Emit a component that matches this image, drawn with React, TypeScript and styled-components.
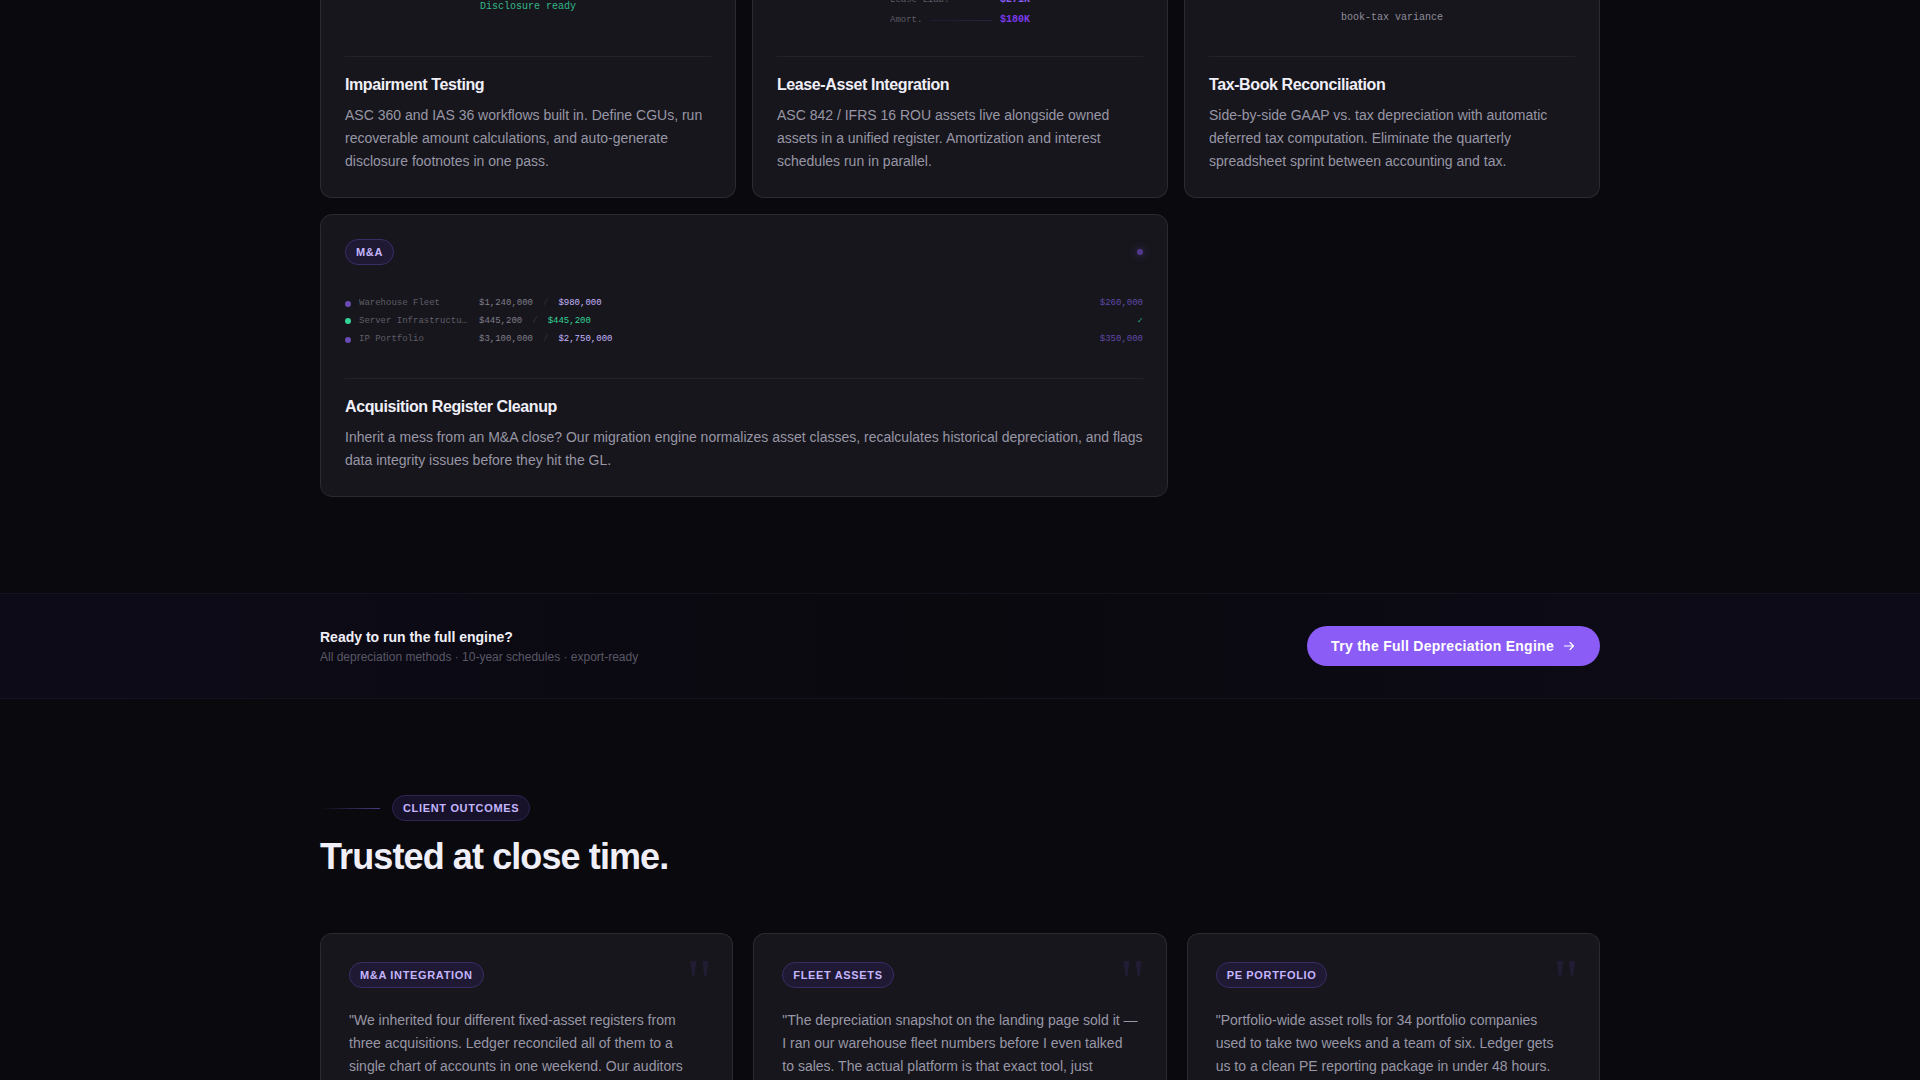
import React from 'react';
import styled, { createGlobalStyle, css } from 'styled-components';

const sans = `"Liberation Sans", Arial, sans-serif`;
const mono = `"Liberation Mono", "Courier New", monospace`;
const serif = `"Liberation Serif", Georgia, serif`;

const GlobalStyle = createGlobalStyle`
  *, *::before, *::after { box-sizing: border-box; }
  body {
    margin: 0;
    background: #09090e;
    color: #f0eff8;
    font-family: ${sans};
    -webkit-font-smoothing: antialiased;
  }
  h2, h3, p, blockquote, figure { margin: 0; }
`;

const Page = styled.main`
  display: flex;
  flex-direction: column;
  height: 100vh;
  overflow: hidden;
`;

const Container = styled.div`
  width: 100%;
  max-width: 1328px;
  margin: 0 auto;
  padding: 0 24px;
`;

const FeatureSection = styled.section`
  flex: none;
  padding-bottom: 96px;
`;

const FeatureGrid = styled.div`
  display: grid;
  grid-template-columns: repeat(3, 1fr);
  gap: 16px;
`;

const surface = css`
  background: #17161c;
  border: 1px solid #2b2a30;
  border-radius: 12px;
`;

const FeatureCard = styled.article<{ $wide?: boolean; $cut?: boolean }>`
  ${surface}
  padding: 24px;
  ${(p) => p.$wide && css`grid-column: span 2;`}
  ${(p) =>
    p.$cut &&
    css`
      padding-top: 0;
      border-top: 0;
      border-top-left-radius: 0;
      border-top-right-radius: 0;
    `}
`;

const CutVisual = styled.div<{ $space: number }>`
  display: flex;
  flex-direction: column;
  align-items: center;
  justify-content: flex-end;
  height: 56px;
  padding-bottom: ${(p) => p.$space}px;
  overflow: hidden;
`;

const Caption = styled.span<{ $ready?: boolean }>`
  flex: none;
  font: 10px/14px ${mono};
  color: ${(p) => (p.$ready ? '#34b88a' : '#8f8d9b')};
`;

const LeaseRows = styled.div`
  display: flex;
  flex: none;
  flex-direction: column;
  gap: 6px;
  width: 140px;
`;

const LeaseRow = styled.div`
  display: flex;
  align-items: center;
  gap: 8px;
  height: 14px;
  font: 9px/14px ${mono};
  color: #5d5b67;
`;

const LeaseLine = styled.span`
  flex: 1;
  height: 1px;
  background: linear-gradient(90deg, #1f1b30, #282143);
`;

const LeaseValue = styled.b<{ $deep?: boolean }>`
  margin-left: auto;
  font-size: 10px;
  color: ${(p) => (p.$deep ? '#7c3aed' : '#8b5cf6')};
`;

const FeatureBody = styled.div`
  padding-top: 16px;
  border-top: 1px solid #232228;
`;

const FeatureTitle = styled.h3`
  margin-bottom: 8px;
  font-size: 16px;
  line-height: 23px;
  letter-spacing: -0.025em;
  color: #f0eff8;
`;

const FeatureText = styled.p`
  font-size: 14px;
  line-height: 23px;
  color: #9896a6;
`;

const CardTop = styled.div`
  display: flex;
  align-items: center;
  justify-content: space-between;
`;

const Tag = styled.span`
  display: inline-block;
  padding: 0 10px;
  border: 1px solid #3a2d66;
  border-radius: 13px;
  background: #1f1933;
  font-size: 11px;
  font-weight: 700;
  line-height: 24px;
  letter-spacing: 0.06em;
  text-transform: uppercase;
  white-space: nowrap;
  color: #c4b5fd;
`;

const StatusDot = styled.span`
  width: 6px;
  height: 6px;
  border-radius: 50%;
  background: #513a8e;
  box-shadow: 0 0 8px #513a8e;
`;

const RegisterWrap = styled.div`
  display: flex;
  align-items: center;
  height: 81px;
  margin: 16px 0;
`;

const RegisterTable = styled.table`
  width: 100%;
  border-collapse: collapse;
  font: 9px/18px ${mono};
  td, th { padding: 0; height: 18px; line-height: 16px; text-align: left; font-weight: 400; vertical-align: top; }
`;

const AssetName = styled.th`
  width: 134px;
  color: #5f5d68;
`;

const AssetLabel = styled.span`
  display: grid;
  grid-template-columns: 6px 112px;
  align-items: center;
  column-gap: 8px;
  height: 16px;
`;

const AssetDot = styled.i<{ $ok?: boolean }>`
  width: 6px;
  height: 6px;
  margin-top: ${(p) => (p.$ok ? 0 : 2)}px;
  border-radius: 50%;
  background: ${(p) => (p.$ok ? '#34d399' : '#684bb5')};
`;

const Clip = styled.span`
  overflow: hidden;
  text-overflow: ellipsis;
  white-space: nowrap;
`;

const Amounts = styled.div`
  display: flex;
  gap: 10px;
  color: #807e8b;
`;

const Slash = styled.span`
  color: #33323a;
`;

const After = styled.span<{ $ok?: boolean }>`
  color: ${(p) => (p.$ok ? '#34d399' : '#c4b5fd')};
`;

const Difference = styled.td<{ $ok?: boolean }>`
  && {
    text-align: right;
    font-weight: ${(p) => (p.$ok ? 700 : 400)};
  }
  color: ${(p) => (p.$ok ? '#2bab7e' : '#6048a8')};
`;

const Banner = styled.section`
  flex: none;
  padding: 32px 0;
  border-top: 1px solid #15131f;
  border-bottom: 1px solid #15131f;
  background: linear-gradient(90deg, #0e0b19, #09090e 50%, #0e0b19);
`;

const BannerRow = styled.div`
  display: flex;
  align-items: center;
  justify-content: space-between;
`;

const BannerTitle = styled.p`
  font-size: 14px;
  font-weight: 700;
  line-height: 22px;
  color: #f0eff8;
`;

const BannerNote = styled.p`
  font-size: 12px;
  line-height: 18px;
  color: #5a5866;
`;

const EngineButton = styled.button`
  display: inline-flex;
  align-items: center;
  gap: 8px;
  height: 40px;
  padding: 0 24px;
  border: 0;
  border-radius: 20px;
  background: #8b5cf6;
  font: 700 14px/20px ${sans};
  letter-spacing: 0.02em;
  color: #fff;
  cursor: pointer;
`;

const Outcomes = styled.section`
  display: flex;
  flex: 1;
  flex-direction: column;
  padding-top: 96px;
  ${Container} { display: flex; flex: 1; flex-direction: column; }
`;

const Eyebrow = styled.div`
  display: flex;
  align-items: center;
  gap: 12px;
  margin-bottom: 16px;
  ${Tag} { background: #17122a; border-color: #2f2554; }
`;

const EyebrowLine = styled.span`
  width: 60px;
  height: 1px;
  background: linear-gradient(90deg, transparent, #4a3a80);
`;

const Heading = styled.h2`
  margin-bottom: 56px;
  font-size: 36px;
  line-height: 40px;
  letter-spacing: -0.025em;
  color: #f0eff8;
`;

const QuoteGrid = styled.div`
  display: grid;
  flex: 1;
  grid-template-columns: repeat(3, 1fr);
  gap: 20px;
`;

const QuoteCard = styled.figure`
  ${surface}
  position: relative;
  padding: 28px 28px 0;
  border-bottom: 0;
  border-bottom-left-radius: 0;
  border-bottom-right-radius: 0;
`;

const QuoteMark = styled.span`
  position: absolute;
  top: 16px;
  right: 20px;
  font: 64px/64px ${serif};
  color: #211c34;
`;

const QuoteText = styled.blockquote`
  margin-top: 21px;
  font-size: 14px;
  line-height: 23px;
  color: #9896a6;
`;

const register = [
  { name: 'Warehouse Fleet', before: '$1,240,000', after: '$980,000', diff: '$260,000', ok: false },
  { name: 'Server Infrastructure', before: '$445,200', after: '$445,200', diff: '✓', ok: true },
  { name: 'IP Portfolio', before: '$3,100,000', after: '$2,750,000', diff: '$350,000', ok: false },
];

const quotes = [
  {
    tag: 'M&A Integration',
    lines: ['"We inherited four different fixed-asset registers from', 'three acquisitions. Ledger reconciled all of them to a', 'single chart of accounts in one weekend. Our auditors'],
  },
  {
    tag: 'Fleet Assets',
    lines: ['"The depreciation snapshot on the landing page sold it —', 'I ran our warehouse fleet numbers before I even talked', 'to sales. The actual platform is that exact tool, just'],
  },
  {
    tag: 'PE Portfolio',
    lines: ['"Portfolio-wide asset rolls for 34 portfolio companies', 'used to take two weeks and a team of six. Ledger gets', 'us to a clean PE reporting package in under 48 hours.'],
  },
];

function Feature({ title, children }: { title: string; children: React.ReactNode }) {
  return (
    <FeatureBody>
      <FeatureTitle>{title}</FeatureTitle>
      <FeatureText>{children}</FeatureText>
    </FeatureBody>
  );
}

function ArrowIcon() {
  return (
    <svg width="14" height="14" viewBox="0 0 14 14" fill="none" stroke="currentColor" strokeWidth="1.2" strokeLinecap="round" strokeLinejoin="round" aria-hidden="true">
      <path d="M2.5 7h9M8 3.5 11.5 7 8 10.5" />
    </svg>
  );
}

export default function App() {
  return (
    <Page>
      <GlobalStyle />
      <FeatureSection>
        <Container>
          <FeatureGrid>
            <FeatureCard $cut>
              <CutVisual $space={42}>
                <Caption $ready>Disclosure ready</Caption>
              </CutVisual>
              <Feature title="Impairment Testing">
                ASC 360 and IAS 36 workflows built in. Define CGUs, run recoverable amount calculations, and
                auto-generate disclosure footnotes in one pass.
              </Feature>
            </FeatureCard>
            <FeatureCard $cut>
              <CutVisual $space={29}>
                <LeaseRows>
                  <LeaseRow>
                    Lease Liab.
                    <LeaseValue>$271K</LeaseValue>
                  </LeaseRow>
                  <LeaseRow>
                    Amort.
                    <LeaseLine />
                    <LeaseValue $deep>$180K</LeaseValue>
                  </LeaseRow>
                </LeaseRows>
              </CutVisual>
              <Feature title="Lease-Asset Integration">
                ASC 842 / IFRS 16 ROU assets live alongside owned assets in a unified register. Amortization and
                interest schedules run in parallel.
              </Feature>
            </FeatureCard>
            <FeatureCard $cut>
              <CutVisual $space={31}>
                <Caption>book-tax variance</Caption>
              </CutVisual>
              <Feature title="Tax-Book Reconciliation">
                Side-by-side GAAP vs. tax depreciation with automatic deferred tax computation. Eliminate the
                quarterly spreadsheet sprint between accounting and tax.
              </Feature>
            </FeatureCard>
            <FeatureCard $wide>
              <CardTop>
                <Tag>M&amp;A</Tag>
                <StatusDot />
              </CardTop>
              <RegisterWrap>
                <RegisterTable>
                  <tbody>
                    {register.map((r) => (
                      <tr key={r.name}>
                        <AssetName scope="row">
                          <AssetLabel>
                            <AssetDot $ok={r.ok} />
                            <Clip>{r.name}</Clip>
                          </AssetLabel>
                        </AssetName>
                        <td>
                          <Amounts>
                            <span>{r.before}</span>
                            <Slash>/</Slash>
                            <After $ok={r.ok}>{r.after}</After>
                          </Amounts>
                        </td>
                        <Difference $ok={r.ok}>{r.diff}</Difference>
                      </tr>
                    ))}
                  </tbody>
                </RegisterTable>
              </RegisterWrap>
              <Feature title="Acquisition Register Cleanup">
                Inherit a mess from an M&amp;A close? Our migration engine normalizes asset classes, recalculates
                historical depreciation, and flags data integrity issues before they hit the GL.
              </Feature>
            </FeatureCard>
          </FeatureGrid>
        </Container>
      </FeatureSection>

      <Banner>
        <Container>
          <BannerRow>
            <div>
              <BannerTitle>Ready to run the full engine?</BannerTitle>
              <BannerNote>All depreciation methods · 10-year schedules · export-ready</BannerNote>
            </div>
            <EngineButton type="button">
              Try the Full Depreciation Engine
              <ArrowIcon />
            </EngineButton>
          </BannerRow>
        </Container>
      </Banner>

      <Outcomes>
        <Container>
          <Eyebrow>
            <EyebrowLine />
            <Tag>Client Outcomes</Tag>
          </Eyebrow>
          <Heading>Trusted at close time.</Heading>
          <QuoteGrid>
            {quotes.map((q) => (
              <QuoteCard key={q.tag}>
                <QuoteMark aria-hidden="true">"</QuoteMark>
                <Tag>{q.tag}</Tag>
                <QuoteText>{q.lines.join(' ')}</QuoteText>
              </QuoteCard>
            ))}
          </QuoteGrid>
        </Container>
      </Outcomes>
    </Page>
  );
}
